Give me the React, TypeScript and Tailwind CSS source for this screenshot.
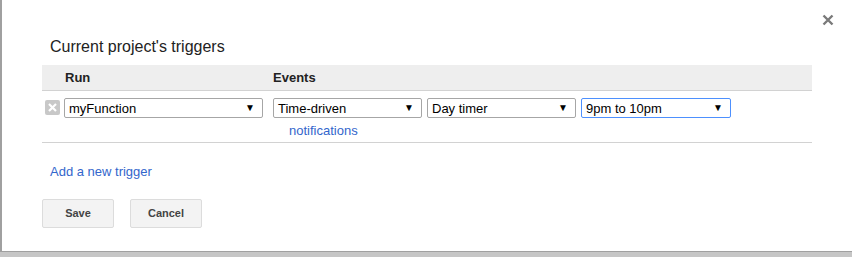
import React from "react";

function Select({ label, width, focused }: { label: string; width: string; focused?: boolean }) {
  return (
    <div
      className={`flex h-[20px] items-center justify-between rounded-[2px] border bg-white pl-[4px] pr-[7px] ${width} ${
        focused ? "border-[#4d90fe]" : "border-[#a6a6a6]"
      }`}
    >
      <span className="text-[13px] leading-none text-black">{label}</span>
      <span className="text-[10px] leading-none text-black">▼</span>
    </div>
  );
}

export default function App() {
  return (
    <div className="h-[257px] w-[852px] bg-[#c6c6c6]" style={{ fontFamily: "Arial, 'Liberation Sans', sans-serif" }}>
      <div className="relative h-[252px] w-full border-b border-l-2 border-[#a0a0a0] bg-white">
        <div className="absolute left-[818px] top-[12px] h-[16px] w-[16px]">
          <svg width="16" height="16" viewBox="0 0 16 16">
            <path d="M3.5 3.5 L12.5 12.5 M12.5 3.5 L3.5 12.5" stroke="#7a7a7a" strokeWidth="2.4" />
          </svg>
        </div>
        <div className="pl-[40px] pt-[37px]">
          <div className="pl-[8px] text-[16px] leading-[19px] text-[#222]">Current project's triggers</div>
          <div className="mt-[9px] w-[770px]">
            <div className="flex h-[26px] items-center border-b border-[#d2d2d2] bg-[#eeeeee] text-[13px] font-bold text-[#222]">
              <div className="w-[231px] pl-[23px]">Run</div>
              <div>Events</div>
            </div>
            <div className="h-[52px] border-b border-[#d2d2d2]">
              <div className="flex items-start pt-[7px]">
                <div className="ml-[3px] mt-[2px] flex h-[15px] w-[15px] items-center justify-center rounded-[2px] bg-[#c8c8c8]">
                  <svg width="11" height="11" viewBox="0 0 11 11">
                    <path d="M2 2 L9 9 M9 2 L2 9" stroke="#fff" strokeWidth="2.2" />
                  </svg>
                </div>
                <div className="ml-[4px]">
                  <Select label="myFunction" width="w-[199px]" />
                </div>
                <div className="ml-[10px] flex flex-col">
                  <div className="flex gap-[5px]">
                    <Select label="Time-driven" width="w-[149px]" />
                    <Select label="Day timer" width="w-[149px]" />
                    <Select label="9pm to 10pm" width="w-[150px]" focused />
                  </div>
                  <div className="mt-[5px] pl-[16px] text-[13px] leading-[15px] text-[#3366cc]">notifications</div>
                </div>
              </div>
            </div>
          </div>
          <div className="mt-[21px] pl-[8px] text-[13px] leading-[15px] text-[#3366cc]">Add a new trigger</div>
          <div className="mt-[20px] flex gap-[16px]">
            <div className="flex h-[29px] w-[72px] items-center justify-center rounded-[2px] border border-[#dcdcdc] bg-[#f3f3f3] text-[11px] font-bold text-[#444]">
              Save
            </div>
            <div className="flex h-[29px] w-[72px] items-center justify-center rounded-[2px] border border-[#dcdcdc] bg-[#f3f3f3] text-[11px] font-bold text-[#444]">
              Cancel
            </div>
          </div>
        </div>
      </div>
    </div>
  );
}
